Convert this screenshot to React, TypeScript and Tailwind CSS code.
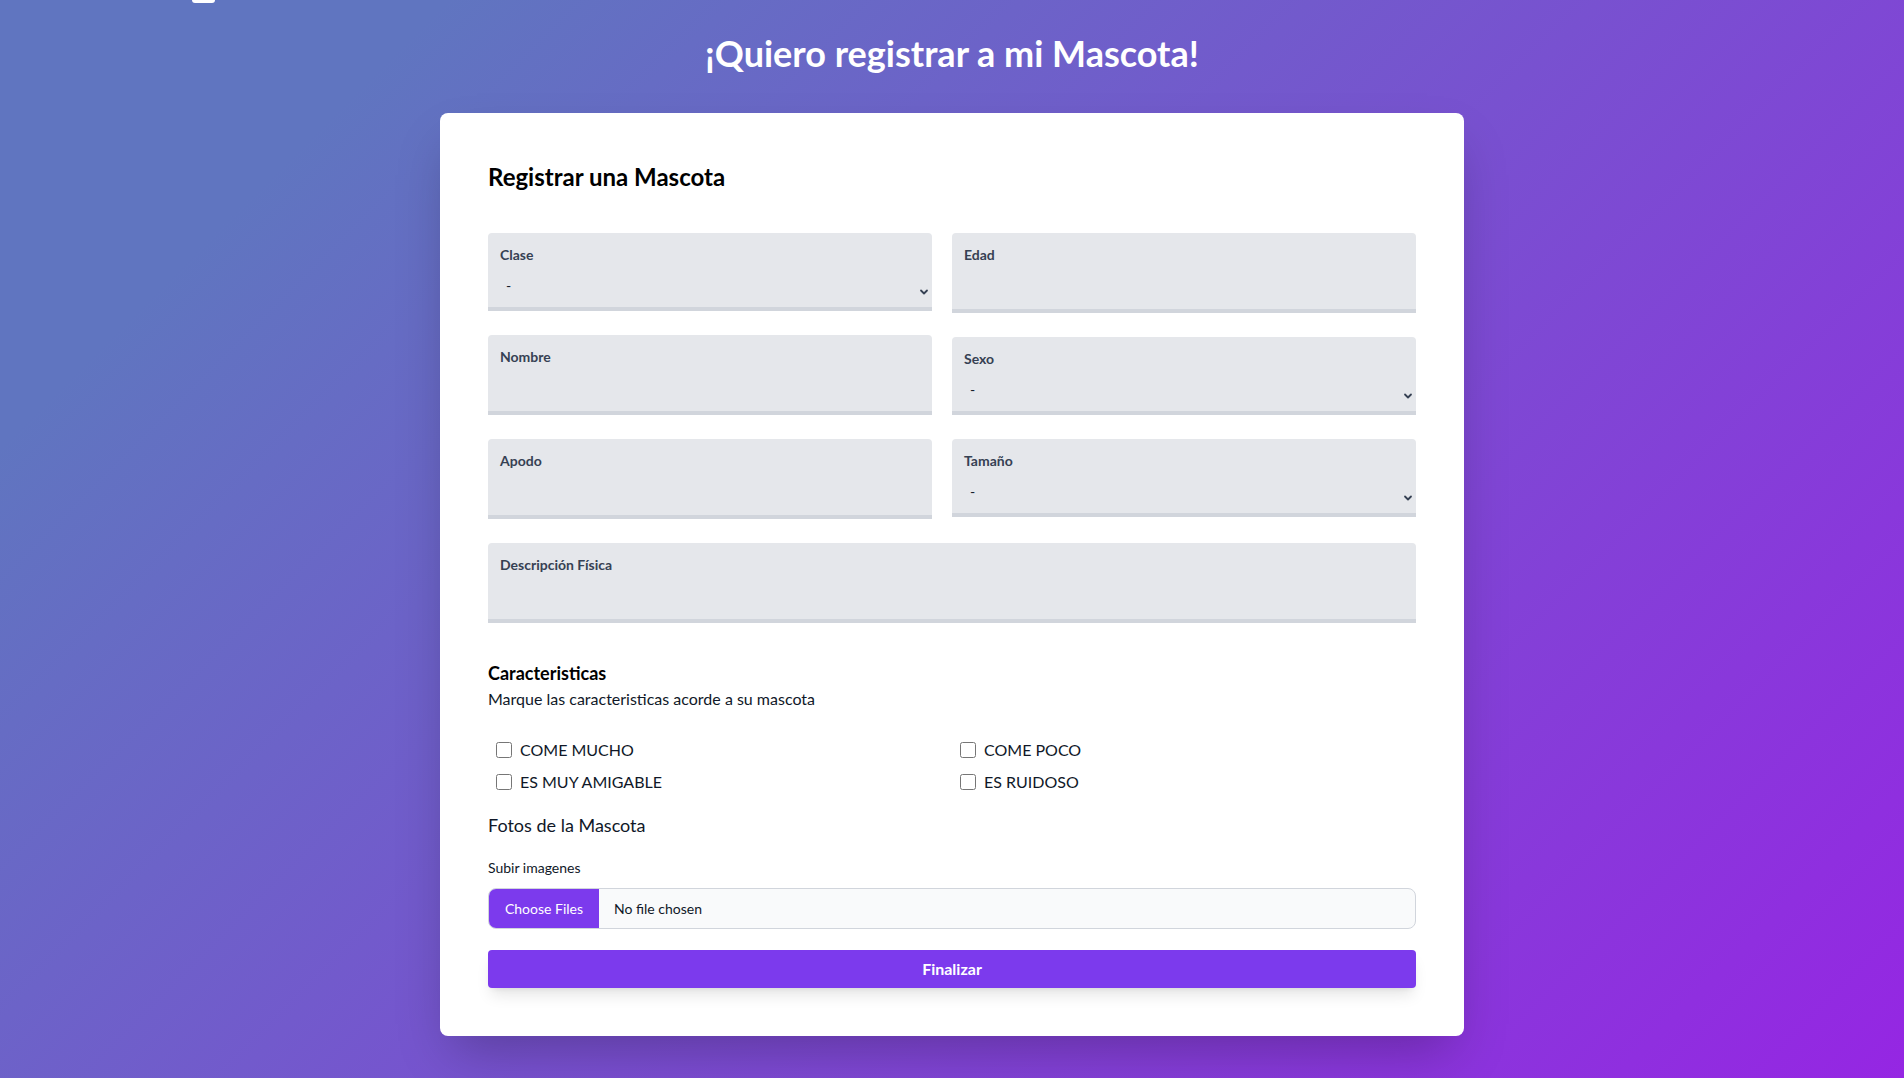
import { ChangeEvent, useState } from "react";

const selectOpts = ["-"];

function SelectBox({ label }: { label: string }) {
  return (
    <div className="h-[78px] rounded-t bg-gray-200 border-b-4 border-gray-300 px-3 pt-3">
      <label className="block text-sm font-bold text-gray-700 leading-5">{label}</label>
      <div className="relative mt-[5px]">
        <select className="w-full appearance-none bg-transparent pl-1.5 pr-6 pt-1 text-sm leading-6 text-gray-900 outline-none">
          {selectOpts.map((o) => (
            <option key={o}>{o}</option>
          ))}
        </select>
        <svg
          className="pointer-events-none absolute right-[-10px] top-[16px] h-3 w-3 text-gray-700"
          viewBox="0 0 20 20"
          fill="none"
          stroke="currentColor"
          strokeWidth="3"
        >
          <path d="M5 7.5l5 5 5-5" strokeLinecap="round" strokeLinejoin="round" />
        </svg>
      </div>
    </div>
  );
}

function InputBox({ label }: { label: string }) {
  return (
    <div className="h-[80px] rounded-t bg-gray-200 border-b-4 border-gray-300 px-3 pt-3">
      <label className="block text-sm font-bold text-gray-700 leading-5">{label}</label>
      <input className="mt-1 w-full bg-transparent text-sm leading-6 text-gray-900 outline-none" />
    </div>
  );
}

function Check({ label }: { label: string }) {
  const [on, setOn] = useState(false);
  return (
    <label className="flex h-6 items-center gap-2 pl-2 text-base text-gray-900">
      <input
        type="checkbox"
        checked={on}
        onChange={(e: ChangeEvent<HTMLInputElement>) => setOn(e.target.checked)}
        className="m-0 h-4 w-4"
      />
      {label}
    </label>
  );
}

export default function App() {
  return (
    <div className="min-h-screen bg-[linear-gradient(135deg,#6075c0_15%,#9526e3_100%)] pb-10 font-[Lato,sans-serif]">
      <div className="h-[3px]">
        <div className="ml-[192px] h-full w-[23px] rounded-b-[10px] bg-white" />
      </div>

      <h1 className="mt-[30px] text-center text-4xl font-bold leading-10 text-white">
        ¡Quiero registrar a mi Mascota!
      </h1>

      <div className="mx-auto mt-10 max-w-5xl rounded-lg bg-white p-12 shadow-2xl">
        <h2 className="text-2xl font-bold leading-8 text-black">Registrar una Mascota</h2>

        <div className="mt-10 grid grid-cols-[444px_1fr] gap-x-5">
          <div className="flex flex-col gap-6">
            <SelectBox label="Clase" />
            <InputBox label="Nombre" />
            <InputBox label="Apodo" />
          </div>
          <div className="flex flex-col gap-6">
            <InputBox label="Edad" />
            <SelectBox label="Sexo" />
            <SelectBox label="Tamaño" />
          </div>
        </div>

        <div className="mt-6">
          <InputBox label="Descripción Física" />
        </div>

        <h3 className="mt-9 text-lg font-bold leading-7 text-black">Caracteristicas</h3>
        <p className="text-base leading-6 text-gray-900">Marque las caracteristicas acorde a su mascota</p>

        <div className="mt-[27px] grid grid-cols-[444px_1fr] gap-x-5 gap-y-2">
          <Check label="COME MUCHO" />
          <Check label="COME POCO" />
          <Check label="ES MUY AMIGABLE" />
          <Check label="ES RUIDOSO" />
        </div>

        <h4 className="mt-[17px] text-lg leading-7 text-gray-900">Fotos de la Mascota</h4>

        <p className="mt-[19px] text-sm leading-5 text-gray-900">Subir imagenes</p>
        <label className="mt-[10px] flex h-[41px] cursor-pointer items-stretch overflow-hidden rounded-lg border border-gray-300 bg-gray-50 text-sm">
          <span className="flex w-[110px] items-center justify-center bg-[#7c3aed] text-white">Choose Files</span>
          <span className="flex items-center pl-[15px] text-gray-900">No file chosen</span>
        </label>

        <button className="mt-[21px] h-[38px] w-full rounded bg-[#7c3aed] text-base font-bold text-white shadow-lg">
          Finalizar
        </button>
      </div>
    </div>
  );
}
